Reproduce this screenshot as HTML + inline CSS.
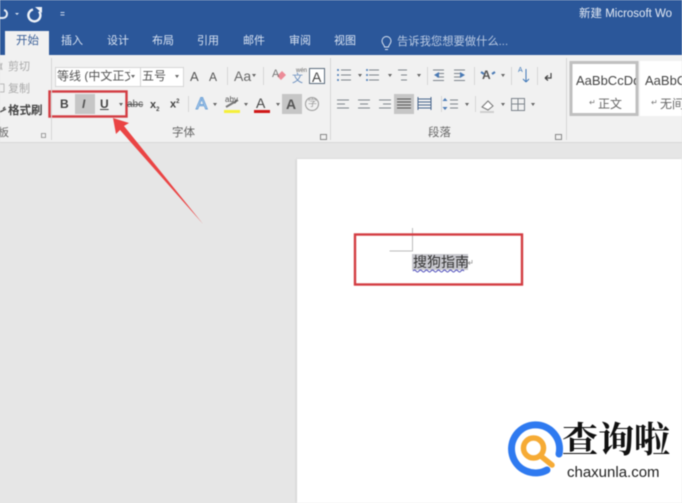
<!DOCTYPE html>
<html><head><meta charset="utf-8">
<style>
html,body{margin:0;padding:0;background:#e6e6e6}
body{width:682px;height:503px;overflow:hidden;position:relative;font-family:"Liberation Sans","Noto Sans CJK SC",sans-serif}
#w{position:absolute;left:0;top:0;width:682px;height:503px;overflow:hidden;background:#e6e6e6;filter:blur(.45px)}
.t{position:absolute;white-space:nowrap;line-height:1;color:#555}
.a{position:absolute}
.w{color:#d9e3f2;font-size:11px;top:36px}
.g{font-size:11px;color:#666}
.sep{position:absolute;width:1px;background:#d6d6d6}
.dd{position:absolute;width:0;height:0;border-left:2.5px solid transparent;border-right:2.5px solid transparent;border-top:3px solid #666}
svg{position:absolute;left:0;top:0}
</style></head>
<body><div id="w">
<div class="a" style="left:0;top:0;width:682px;height:55px;background:#2b579a"></div>
<div class="a" style="left:0;top:55px;width:682px;height:87px;background:#f1f1f1;border-bottom:1px solid #d8d8d8"></div>
<div class="a" style="left:5px;top:31px;width:44px;height:25px;background:#f1f1f1"></div>
<div class="a" style="left:297px;top:159px;width:385px;height:344px;background:#fff;box-shadow:-1px 0 2px #d0d0d0"></div>

<div class="t" style="left:16px;top:36px;font-size:11.500px;color:#3c6199">开始</div>
<div class="t w" style="left:61px">插入</div>
<div class="t w" style="left:107px">设计</div>
<div class="t w" style="left:152px">布局</div>
<div class="t w" style="left:197px">引用</div>
<div class="t w" style="left:243px">邮件</div>
<div class="t w" style="left:289px">审阅</div>
<div class="t w" style="left:334px">视图</div>
<div class="t" style="left:397px;top:37px;font-size:11.300px;color:#b9c9e2">告诉我您想要做什么...</div>
<div class="t" style="left:579px;top:9px;font-size:11.500px;color:#e4eaf4">新建 Microsoft Wo</div>

<svg width="682" height="503" viewBox="0 0 682 503" fill="none">
 <path d="M0 18h3a4 4 0 0 0 4-4 4 4 0 0 0-3-4" stroke="#e8eef7" stroke-width="2"/>
 <path d="M15 13l2 2 2-2z" fill="#dfe7f3"/>
 <path d="M33 9.500a6 6 0 1 0 6 2" stroke="#eef2f8" stroke-width="2.400"/>
 <path d="M35 7h7v6z" fill="#eef2f8"/>
 <path d="M60.500 12.500h4M60.500 15h4" stroke="#c8d5e9" stroke-width="1"/>
 <path d="M384.500 47c0-2-2.500-3-2.500-6a4.500 4.500 0 0 1 9 0c0 3-2.500 4-2.500 6zM385 49.500h3" stroke="#dbe4f1" stroke-width="1"/>

 <!-- clipboard icons -->
 <path d="M2 63l-2 7M0 63l2 7" stroke="#b5b5b5"/>
 <rect x="-1" y="84" width="5" height="8" stroke="#bbb"/>
 <path d="M0 112l6-3M3 109l2-2" stroke="#555" stroke-width="1.500"/>
 <path d="M41.500 133.500h4v4h-4z" stroke="#888" stroke-width="0.800"/>

 <!-- font group highlights -->
 <rect x="75" y="94" width="20" height="20" fill="#c6c6c6"/>
 <rect x="282" y="94" width="20" height="20" fill="#c6c6c6"/>
 <rect x="394" y="94" width="20" height="20" fill="#c6c6c6"/>
 <!-- font boxes -->
 <rect x="55.500" y="67.500" width="85" height="19" fill="#fff" stroke="#d5d5d5"/>
 <rect x="140.500" y="67.500" width="43" height="19" fill="#fff" stroke="#d5d5d5"/>
 <rect x="309.500" y="68.500" width="15" height="15" fill="#fff" stroke="#5b6b7d"/>

 <!-- highlight, colour bars -->
 <rect x="224" y="110" width="16" height="3" fill="#f5ef3a"/>
 <rect x="254" y="110" width="16" height="3" fill="#d01818"/>
 <path d="M226 107l12-7" stroke="#777" stroke-width="2"/>
 <path d="M277 76l5-5 4 4-5 5z" fill="#ec8b98"/>
 <circle cx="312" cy="104" r="6.500" stroke="#999"/>

 <!-- paragraph icons -->
 <g stroke="#7d848c" stroke-width="1">
  <path d="M341 70h10M341 75h10M341 80h10M369 70h10M369 75h10M369 80h10M398 70h9M401 75h6M401 80h6"/>
  <path d="M433 70h11M437 73.500h7M437 77h7M433 80.500h11M454 70h11M454 73.500h7M454 77h7M454 80.500h11"/>
  <path d="M337 100h12M337 104h8M337 108h12M358 100h12M360 104h8M358 108h12M379 100h12M383 104h8M379 108h12"/>
  <path d="M397 99h14M397 102h14M397 105h14M397 108h14" stroke="#555"/>
  <path d="M418 99h13M418 102h13M418 105h13M418 108h13M418 97v13M431 97v13" stroke="#46638c"/>
  <path d="M450 100h8M450 104h8M450 108h8"/>
  <rect x="511.500" y="98.500" width="13" height="12"/><path d="M518 98v12M511 104h13"/>
 </g>
 <g fill="#4a7ab5">
  <circle cx="338" cy="70" r="1"/><circle cx="338" cy="75" r="1"/><circle cx="338" cy="80" r="1"/>
  <circle cx="367" cy="70" r="1"/><circle cx="367" cy="75" r="1"/><circle cx="367" cy="80" r="1"/>
  <path d="M434 75l5-3v6zM465 75l-5-3v6z"/>
  <path d="M445 98l2.500 3h-5zM445 110l2.500-3h-5z"/>
 </g>
 <path d="M481 72l3 2M495 72l-3 2" stroke="#4a7ab5" stroke-width="2"/>
 <path d="M545 78h6v-5M545 78l3-2.500M545 78l3 2.500" stroke="#444" stroke-width="1.200"/>
 <path d="M526 69v13M526 82l-3-3M526 82l3-3" stroke="#3f77b8" stroke-width="1"/>
 <path d="M482 107l6-6 5 5-5 4z" stroke="#777" fill="#fff"/>
 <rect x="480" y="111" width="14" height="2" fill="#cfcfcf"/>

 <!-- styles gallery -->
 <rect x="571" y="62.500" width="66" height="52" fill="#fff" stroke="#c0c0c0" stroke-width="3"/>
 <rect x="640" y="61" width="42" height="55" fill="#fff"/>

 <!-- Document corner and selection -->
 <path d="M389.500 251h23V228" stroke="#bdbdbd"/>
 <rect x="412" y="254" width="56" height="16" fill="#c9c9cf"/>
 <path d="M413 271q1.500-2 3 0t3 0 3 0 3 0 3 0 3 0 3 0 3 0 3 0 3 0 3 0 3 0 3 0 3 0 3 0 3 0 3 0" stroke="#4848b8" stroke-width="1"/>
 <path d="M472 260v3h-4M468 263l2-1.500M468 263l2 1.500" stroke="#999" stroke-width="0.800"/>

 <!-- Red boxes -->
 <rect x="49.500" y="91.500" width="77" height="25" stroke="#d33c42" stroke-width="2.400"/>
 <rect x="355" y="234.500" width="167" height="50" stroke="#d33c42" stroke-width="2.400"/>
 <!-- Arrow -->
 <path d="M113 118l16 5-5 3 79 98-83-94-4 4z" fill="#ea4444"/>

 <!-- Logo -->
 <rect x="500" y="410" width="182" height="85" fill="#fff"/>
 <path d="M559 454A24 24 0 1 0 547 470" stroke="#2f7af0" stroke-width="7" stroke-linecap="round"/>
 <circle cx="533.500" cy="448" r="10" stroke="#f6ab35" stroke-width="5.500"/>
 <path d="M542 457l10 8" stroke="#f6ab35" stroke-width="5.500" stroke-linecap="round"/>
</svg>

<div class="dd" style="left:131px;top:75px"></div>
<div class="dd" style="left:175px;top:75px"></div>
<div class="dd" style="left:119px;top:103px"></div>
<div class="dd" style="left:213px;top:103px"></div>
<div class="dd" style="left:244px;top:103px"></div>
<div class="dd" style="left:276px;top:103px"></div>
<div class="dd" style="left:252px;top:74px"></div>
<div class="dd" style="left:358px;top:74px"></div>
<div class="dd" style="left:388px;top:74px"></div>
<div class="dd" style="left:417px;top:74px"></div>
<div class="dd" style="left:501px;top:74px"></div>
<div class="dd" style="left:465px;top:103px"></div>
<div class="dd" style="left:501px;top:103px"></div>
<div class="dd" style="left:531px;top:103px"></div>

<div class="t" style="left:8px;top:62px;font-size:11px;color:#aaa">剪切</div>
<div class="t" style="left:8px;top:84px;font-size:11px;color:#aaa">复制</div>
<div class="t" style="left:8px;top:106px;font-size:11.500px;color:#444;font-weight:bold">格式刷</div>
<div class="t g" style="left:-2px;top:128px">板</div>

<div class="t" style="left:57px;top:70px;font-size:12px;width:73px;overflow:hidden">等线 (中文正文)</div>
<div class="t" style="left:142px;top:70px;font-size:12px">五号</div>
<div class="t" style="left:190px;top:70px;font-size:13px">A</div>
<div class="t" style="left:209px;top:71px;font-size:12px">A</div>
<div class="t" style="left:234px;top:69px;font-size:14px;color:#666">Aa</div>
<div class="t" style="left:272px;top:69px;font-size:11px;color:#777">A</div>
<div class="t" style="left:296px;top:68px;font-size:6px;color:#666">wén</div>
<div class="t" style="left:292px;top:74px;font-size:11px;color:#6a8fbf">文</div>
<div class="t" style="left:312px;top:70px;font-size:14px;color:#444">A</div>

<div class="t" style="left:60px;top:98px;font-size:12px;font-weight:bold;color:#444">B</div>
<div class="t" style="left:82px;top:98px;font-size:12px;font-weight:bold;font-style:italic;color:#555">I</div>
<div class="t" style="left:100px;top:98px;font-size:12px;font-weight:bold;color:#444;text-decoration:underline">U</div>
<div class="t" style="left:127px;top:100px;font-size:10px;color:#555;text-decoration:line-through">abc</div>
<div class="t" style="left:150px;top:100px;font-size:11px;font-weight:bold;color:#444">x<sub style="font-size:6px">2</sub></div>
<div class="t" style="left:170px;top:99px;font-size:11px;font-weight:bold;color:#444">x<sup style="font-size:6px">2</sup></div>
<div class="t" style="left:196px;top:95px;font-size:17px;color:#d8e8f8;-webkit-text-stroke:1px #6fa3d8">A</div>
<div class="t" style="left:225px;top:96px;font-size:8px;color:#555">aby</div>
<div class="t" style="left:256px;top:96px;font-size:14px;color:#444">A</div>
<div class="t" style="left:286px;top:97px;font-size:14px;color:#555;font-weight:bold">A</div>
<div class="t" style="left:308px;top:99px;font-size:9px;color:#999">字</div>
<div class="t g" style="left:172px;top:128px;font-size:11.500px">字体</div>
<div class="t g" style="left:428px;top:128px;font-size:11.500px">段落</div>
<div class="t" style="left:482px;top:69px;font-size:12px;font-weight:bold;color:#555">A</div>
<div class="t" style="left:518px;top:67px;font-size:7px;color:#3f77b8">A</div>

<div class="t" style="left:576px;top:74px;width:60px;overflow:hidden;font-size:13px;color:#444">AaBbCcDd</div>
<div class="t" style="left:645px;top:74px;width:37px;overflow:hidden;font-size:13px;color:#444">AaBbCcDd</div>
<div class="t" style="left:589px;top:99px;font-size:8px;color:#777">↵</div>
<div class="t" style="left:598px;top:98px;font-size:12px;color:#666">正文</div>
<div class="t" style="left:651px;top:99px;font-size:8px;color:#777">↵</div>
<div class="t" style="left:660px;top:98px;font-size:12px;color:#666">无间隔</div>

<div class="sep" style="left:51px;top:58px;height:82px"></div>
<div class="sep" style="left:330px;top:58px;height:82px"></div>
<div class="sep" style="left:566px;top:58px;height:82px"></div>
<div class="sep" style="left:227px;top:67px;height:18px"></div>
<div class="sep" style="left:263px;top:67px;height:18px"></div>
<div class="sep" style="left:188px;top:96px;height:16px"></div>
<div class="sep" style="left:427px;top:67px;height:18px"></div>
<div class="sep" style="left:474px;top:67px;height:18px"></div>
<div class="sep" style="left:511px;top:67px;height:18px"></div>
<div class="sep" style="left:537px;top:67px;height:18px"></div>
<div class="sep" style="left:441px;top:96px;height:16px"></div>
<div class="sep" style="left:475px;top:96px;height:16px"></div>

<div class="a" style="left:320px;top:134px;width:5px;height:4px;border:1px solid #888"></div>
<div class="a" style="left:555px;top:134px;width:5px;height:4px;border:1px solid #888"></div>

<div class="t" style="left:413px;top:255px;font-size:14px;color:#333">搜狗指南</div>

<div class="t" style="left:562px;top:422px;font-size:36px;color:#111;font-weight:bold;font-family:'Liberation Serif','Noto Serif CJK SC',serif">查询啦</div>
<div class="t" style="left:567px;top:465px;font-size:15px;color:#222">chaxunla.com</div>
</div></body></html>
